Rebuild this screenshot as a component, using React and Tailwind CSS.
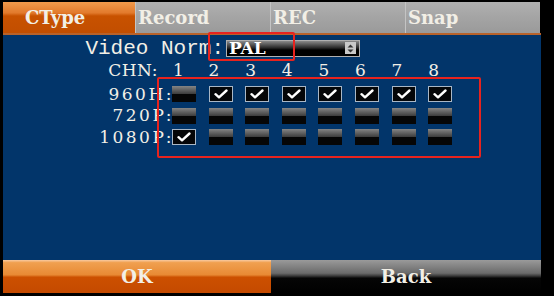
const tabs = [
  { label: "CType", active: true },
  { label: "Record" },
  { label: "REC" },
  { label: "Snap" },
];

const rows = [
  { label: "960H:", checks: [0, 1, 1, 1, 1, 1, 1, 1] },
  { label: "720P:", checks: [0, 0, 0, 0, 0, 0, 0, 0] },
  { label: "1080P:", checks: [1, 0, 0, 0, 0, 0, 0, 0] },
];

function Box({ on }) {
  if (on) {
    return (
      <div className="w-[24px] h-[16px] bg-[#050608] border border-[#a9b7c6] flex items-center justify-center">
        <svg width="14" height="10" viewBox="0 0 14 10">
          <path d="M1.5 5.2 L5 8.3 L12.5 1.5" fill="none" stroke="#ffffff" strokeWidth="2.4" strokeLinecap="round" strokeLinejoin="round" />
        </svg>
      </div>
    );
  }
  return (
    <div className="w-[24px] h-[16px] flex flex-col">
      <div className="h-[8px] bg-[linear-gradient(#858585,#3c3c3c)]" />
      <div className="h-[8px] bg-[#060606]" />
    </div>
  );
}

export default function App() {
  return (
    <div className="w-[554px] h-[296px] bg-black pl-[3px] pt-[2px] font-['DejaVu_Serif',serif] text-[#f2efe6] relative overflow-hidden">
      <div className="w-[538px] h-[291px] flex flex-col">
        <div className="h-[31px] flex">
          {tabs.map((t) => (
            <div
              key={t.label}
              className={
                t.active
                  ? "w-[132px] pl-[22px] flex items-center text-[18px] font-bold bg-[linear-gradient(#f09a4c,#e27a2c_35%,#c85200_45%,#c24e00)]"
                  : "w-[135px] pl-[2px] flex items-center text-[18px] font-bold bg-[linear-gradient(#b0b0b0,#a4a4a4_50%,#9a9a9a)] border-l border-[#c4c4c4]"
              }
            >
              {t.label}
            </div>
          ))}
        </div>
        <div className="h-[2px] bg-[#b8622a]" />
        <div className="flex-1 bg-[#02356a] pt-[4px] flex flex-col">
          <div className="h-[18px] flex items-center">
            <div className="w-[221px] text-right font-['Liberation_Mono',monospace] text-[21px] leading-none">Video Norm:</div>
            <div className="ml-[2px] w-[134px] h-[17px] border border-[#b0b0b0] bg-[linear-gradient(#8a8a8a,#2a2a2a_45%,#000_60%)] flex items-center pl-[2px] pr-[3px]">
              <span className="text-[17px] font-bold text-white leading-none">PAL</span>
              <div className="ml-auto w-[11px] h-[12px] bg-[#c8c8c8] flex items-center justify-center">
                <svg width="7" height="9" viewBox="0 0 7 9">
                  <path d="M3.5 0.5 L6.5 3.5 L0.5 3.5 Z M3.5 8.5 L6.5 5.5 L0.5 5.5 Z" fill="#333" />
                </svg>
              </div>
            </div>
          </div>
          <div className="mt-[4px] h-[18px] flex items-center text-[17px] leading-none">
            <div className="w-[155px] text-right tracking-[0.5px]">CHN:</div>
            <div className="ml-[14px] grid grid-cols-[repeat(8,36.6px)]">
              {[1, 2, 3, 4, 5, 6, 7, 8].map((n) => (
                <div key={n} className={n === 1 ? "pl-[1px]" : ""}>{n}</div>
              ))}
            </div>
          </div>
          <div className="mt-[7px] flex flex-col gap-[5.5px]">
            {rows.map((r) => (
              <div key={r.label} className="h-[16px] flex items-center text-[17px] leading-none">
                <div className="w-[171px] -mr-[2px] text-right tracking-[2.5px]">{r.label}</div>
                <div className="grid grid-cols-[repeat(8,36.6px)]">
                  {r.checks.map((c, i) => (
                    <Box key={i} on={c === 1} />
                  ))}
                </div>
              </div>
            ))}
          </div>
        </div>
        <div className="h-[33px] flex">
          <div className="w-[268px] flex items-center justify-center text-[18px] font-bold bg-[linear-gradient(#f9caa0,#f0a050_8%,#e88a34_45%,#cc5000_52%,#c44a00)]">OK</div>
          <div className="w-[270px] flex items-center justify-center text-[18px] font-bold bg-[linear-gradient(#9a9a9a,#6a6a6a_40%,#3a3a3a_48%,#050505_55%,#000)]">Back</div>
        </div>
      </div>
      <div className="absolute left-[208px] top-[32px] w-[87px] h-[29px] border-2 border-[#e8231e] rounded-[2px]" />
      <div className="absolute left-[157px] top-[77px] w-[324px] h-[81px] border-2 border-[#e8231e] rounded-[2px]" />
    </div>
  );
}
